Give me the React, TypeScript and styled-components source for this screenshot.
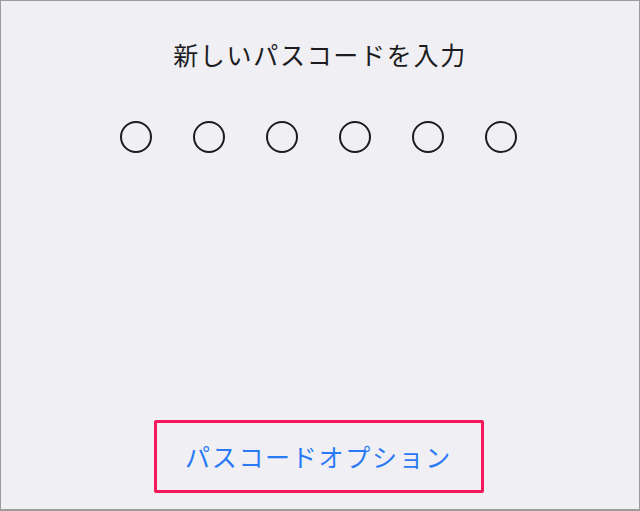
import React from 'react'
import styled, { createGlobalStyle } from 'styled-components'

const GlobalStyle = createGlobalStyle`
	html, body {
		margin: 0;
		padding: 0;
		background: #efeff4;
	}
	* {
		box-sizing: border-box;
	}
`

const Screen = styled.div`
	display: flex;
	flex-direction: column;
	align-items: center;
	width: 640px;
	height: 511px;
	border: 1px solid #9c9c9c;
	border-bottom-width: 2px;
	background: #efeff4;
	font-family: 'Noto Sans CJK JP', 'Noto Sans', sans-serif;
`

const Title = styled.h1`
	margin: 36px 0 0;
	font-size: 25px;
	font-weight: 400;
	line-height: 34px;
	letter-spacing: 1.7px;
	color: #1c1c1e;
`

const Dots = styled.div`
	display: flex;
	gap: 41px;
	margin-top: 50px;
	margin-right: 3px;
`

const Dot = styled.span`
	width: 32px;
	height: 32px;
	border: 2px solid #1c1c1e;
	border-radius: 50%;
`

const Spacer = styled.div`
	flex: 1;
`

const OptionButton = styled.button`
	display: flex;
	align-items: center;
	justify-content: center;
	width: 330px;
	height: 73px;
	margin-bottom: 16px;
	margin-right: 3px;
	padding: 0 0 2px;
	background: none;
	border: 3px solid #f5195a;
	border-radius: 2px;
	font-family: inherit;
	font-size: 25px;
	letter-spacing: 1.7px;
	color: #2a7af5;
	cursor: pointer;
`

export default function App() {
	return (
		<>
			<GlobalStyle />
			<Screen>
				<Title>新しいパスコードを入力</Title>
				<Dots>
					{Array.from({ length: 6 }, (_, i) => (
						<Dot key={i} />
					))}
				</Dots>
				<Spacer />
				<OptionButton>パスコードオプション</OptionButton>
			</Screen>
		</>
	)
}
